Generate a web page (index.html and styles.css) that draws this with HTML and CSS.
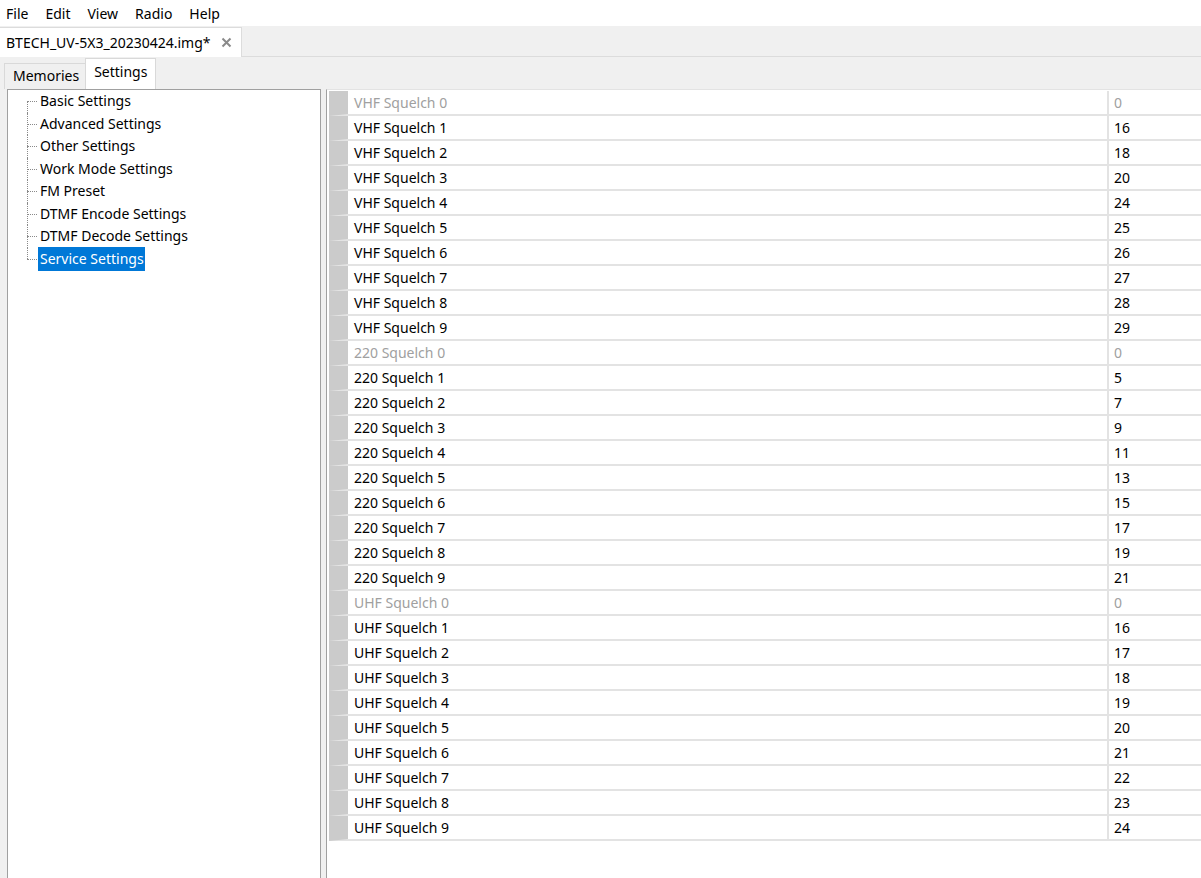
FILE: index.html
```html
<!DOCTYPE html>
<html lang="en">

<head>
    <meta charset="UTF-8">
    <title>CHIRP</title>
    <link rel="stylesheet" href="styles.css">
</head>

<body>
    <div class="menubar">
        <span>File</span>
        <span>Edit</span>
        <span>View</span>
        <span>Radio</span>
        <span>Help</span>
    </div>

    <div class="filetabs">
        <div class="filetab">
            <span>BTECH_UV-5X3_20230424.img*</span>
            <svg class="close" width="11" height="11" viewBox="0 0 11 11">
                <path d="M1.5 1.5 L9.5 9.5 M9.5 1.5 L1.5 9.5" stroke="#8a8a8a" stroke-width="2" />
            </svg>
        </div>
    </div>

    <div class="subtabs">
        <div class="subtab">Memories</div>
        <div class="subtab current">Settings</div>
    </div>

    <div class="main">
        <div class="tree">
            <ul class="branch">
                <li>Basic Settings</li>
                <li>Advanced Settings</li>
                <li>Other Settings</li>
                <li>Work Mode Settings</li>
                <li>FM Preset</li>
                <li>DTMF Encode Settings</li>
                <li>DTMF Decode Settings</li>
                <li class="last"><span class="sel">Service Settings</span></li>
            </ul>
        </div>

        <div class="grid">
            <div class="rows" id="rows"></div>
        </div>
    </div>

    <script>
        var data = [
            ["VHF Squelch 0", "0", 1], ["VHF Squelch 1", "16"], ["VHF Squelch 2", "18"],
            ["VHF Squelch 3", "20"], ["VHF Squelch 4", "24"], ["VHF Squelch 5", "25"],
            ["VHF Squelch 6", "26"], ["VHF Squelch 7", "27"], ["VHF Squelch 8", "28"],
            ["VHF Squelch 9", "29"],
            ["220 Squelch 0", "0", 1], ["220 Squelch 1", "5"], ["220 Squelch 2", "7"],
            ["220 Squelch 3", "9"], ["220 Squelch 4", "11"], ["220 Squelch 5", "13"],
            ["220 Squelch 6", "15"], ["220 Squelch 7", "17"], ["220 Squelch 8", "19"],
            ["220 Squelch 9", "21"],
            ["UHF Squelch 0", "0", 1], ["UHF Squelch 1", "16"], ["UHF Squelch 2", "17"],
            ["UHF Squelch 3", "18"], ["UHF Squelch 4", "19"], ["UHF Squelch 5", "20"],
            ["UHF Squelch 6", "21"], ["UHF Squelch 7", "22"], ["UHF Squelch 8", "23"],
            ["UHF Squelch 9", "24"]
        ];
        var rows = document.getElementById("rows");
        var html = "";
        for (var i = 0; i < data.length; i++) {
            var cls = data[i][2] ? "row off" : "row";
            html += '<div class="' + cls + '"><div class="lbl">' + data[i][0] +
                '</div><div class="val">' + data[i][1] + '</div></div>';
        }
        rows.innerHTML = html;
    </script>
</body>

</html>
```

FILE: styles.css
```css
* {
    margin: 0;
    padding: 0;
    box-sizing: border-box;
}

html,
body {
    height: 100%;
}

body {
    font: 14px "Noto Sans", "Open Sans", sans-serif;
    color: #000;
    background-color: #fff;
    display: flex;
    flex-direction: column;
    overflow: hidden;
}

.menubar {
    height: 26px;
    display: flex;
    gap: 17px;
    align-items: center;
    padding-left: 6px;
    background-color: #fff;
}

.filetabs {
    height: 31px;
    background-color: #f0f0f0;
    border-bottom: 1px solid #dcdcdc;
    display: flex;
    align-items: flex-end;
}

.filetab {
    height: 30px;
    width: 242px;
    background-color: #fff;
    border: 1px solid #dcdcdc;
    border-bottom: none;
    border-left: none;
    display: flex;
    align-items: center;
    gap: 10px;
    padding-left: 6px;
    margin-bottom: -1px;
}

.subtabs {
    height: 32px;
    background-color: #f0f0f0;
    display: flex;
    align-items: flex-end;
    padding-left: 4px;
}

.subtab {
    height: 26px;
    padding: 0 6px 3px 8px;
    border: 1px solid #d9d9d9;
    border-bottom: none;
    background-color: #f0f0f0;
    display: flex;
    align-items: center;
}

.subtab.current {
    height: 31px;
    background-color: #fff;
    padding: 0 8px 6px 8px;
    margin-left: -1px;
}

.main {
    flex: 1;
    display: flex;
    background-color: #f0f0f0;
    padding-left: 7px;
    gap: 5px;
}

.tree {
    width: 314px;
    background-color: #fff;
    border: 1px solid #a0a0a0;
    border-bottom: none;
    padding: 0 0 0 19px;
}

.branch {
    list-style: none;
    position: relative;
}

.branch li {
    height: 22.5px;
    line-height: 22px;
    padding-left: 13px;
    position: relative;
    white-space: nowrap;
}

.branch li::before {
    content: "";
    position: absolute;
    left: 0;
    top: 0;
    bottom: 0;
    border-left: 1px dotted #8a8a8a;
}

.branch li::after {
    content: "";
    position: absolute;
    left: 0;
    top: 11px;
    width: 10px;
    border-top: 1px dotted #8a8a8a;
}

.branch li:first-child::before {
    top: 11px;
}

.branch li.last::before {
    bottom: 11px;
}

.sel {
    background-color: #0078d7;
    color: #fff;
    padding: 2px 1px 3px 2px;
    margin-left: -2px;
}

.grid {
    flex: 1;
    background-color: #fff;
    border-left: 1px solid #a0a0a0;
    border-top: 1px solid #e3e3e3;
    padding: 1px 0 0 2px;
}

.rows {
    display: flex;
    flex-direction: column;
}

.row {
    height: 25px;
    display: flex;
    border-left: 19px solid #cbcbcb;
    border-bottom: 2px solid #e3e3e3;
}

.row .lbl {
    flex: 1;
    padding-left: 6px;
    line-height: 23px;
}

.row .val {
    width: 94px;
    border-left: 2px solid #e3e3e3;
    padding-left: 5px;
    line-height: 23px;
}

.row.off {
    color: #a0a0a0;
}
```
